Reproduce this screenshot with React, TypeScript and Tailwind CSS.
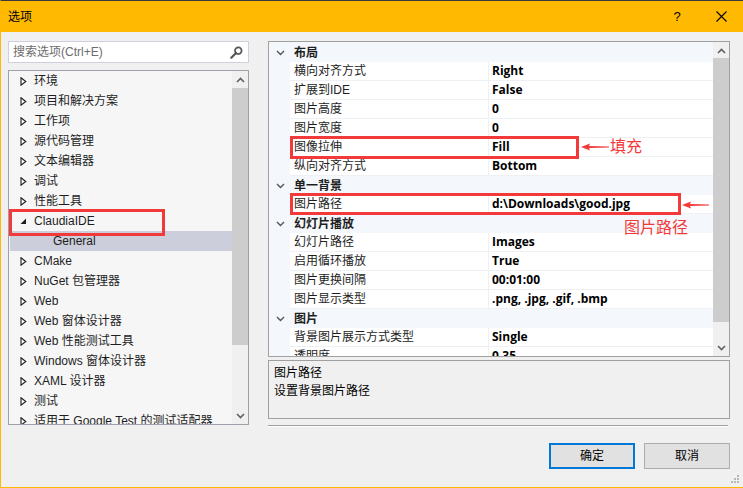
import React from "react";

const FONT = "font-['Liberation_Sans','Noto_Sans_CJK_SC',sans-serif]";

const treeItems: { label: string; state: "closed" | "open" | "leaf"; selected?: boolean }[] = [
  { label: "环境", state: "closed" },
  { label: "项目和解决方案", state: "closed" },
  { label: "工作项", state: "closed" },
  { label: "源代码管理", state: "closed" },
  { label: "文本编辑器", state: "closed" },
  { label: "调试", state: "closed" },
  { label: "性能工具", state: "closed" },
  { label: "ClaudiaIDE", state: "open" },
  { label: "General", state: "leaf", selected: true },
  { label: "CMake", state: "closed" },
  { label: "NuGet 包管理器", state: "closed" },
  { label: "Web", state: "closed" },
  { label: "Web 窗体设计器", state: "closed" },
  { label: "Web 性能测试工具", state: "closed" },
  { label: "Windows 窗体设计器", state: "closed" },
  { label: "XAML 设计器", state: "closed" },
  { label: "测试", state: "closed" },
  { label: "适用于 Google Test 的测试适配器", state: "closed" },
];

const groups: { name: string; rows: [string, string][] }[] = [
  {
    name: "布局",
    rows: [
      ["横向对齐方式", "Right"],
      ["扩展到IDE", "False"],
      ["图片高度", "0"],
      ["图片宽度", "0"],
      ["图像拉伸", "Fill"],
      ["纵向对齐方式", "Bottom"],
    ],
  },
  { name: "单一背景", rows: [["图片路径", "d:\\Downloads\\good.jpg"]] },
  {
    name: "幻灯片播放",
    rows: [
      ["幻灯片路径", "Images"],
      ["启用循环播放", "True"],
      ["图片更换间隔", "00:01:00"],
      ["图片显示类型", ".png, .jpg, .gif, .bmp"],
    ],
  },
  {
    name: "图片",
    rows: [
      ["背景图片展示方式类型", "Single"],
      ["透明度", "0.35"],
    ],
  },
];

function Chevron({ dir }: { dir: "up" | "down" }) {
  return (
    <svg width="9" height="6" viewBox="0 0 9 6">
      <path
        d={dir === "up" ? "M1 5 L4.5 1.5 L8 5" : "M1 1 L4.5 4.5 L8 1"}
        fill="none"
        stroke="#606060"
        strokeWidth="1.6"
      />
    </svg>
  );
}

function Scrollbar({ thumbTop, thumbHeight }: { thumbTop: number; thumbHeight: number }) {
  return (
    <div className="relative w-4 h-full bg-[#f0f0f0] flex flex-col justify-between items-center">
      <div className="h-[17px] flex items-center justify-center">
        <Chevron dir="up" />
      </div>
      <div
        className="absolute left-0 w-4 bg-[#cdcdcd]"
        style={{ top: thumbTop, height: thumbHeight }}
      />
      <div className="h-[17px] flex items-center justify-center">
        <Chevron dir="down" />
      </div>
    </div>
  );
}

function TreeArrow({ state }: { state: "closed" | "open" | "leaf" }) {
  if (state === "leaf") return <span className="w-[7px]" />;
  if (state === "open")
    return (
      <svg width="7" height="7" viewBox="0 0 7 7">
        <path d="M6 0.5 L6 6 L0.5 6 Z" fill="#1e1e1e" />
      </svg>
    );
  return (
    <svg width="7" height="9" viewBox="0 0 7 9">
      <path d="M1 0.8 L5.8 4.5 L1 8.2 Z" fill="none" stroke="#1e1e1e" strokeWidth="1.1" />
    </svg>
  );
}

function Annot({ className }: { className: string }) {
  return <div className={`absolute border-[3px] border-[#f23a3a] ${className}`} />;
}

function Arrow({ className, width }: { className: string; width: number }) {
  return (
    <svg className={`absolute ${className}`} width={width} height="10" viewBox={`0 0 ${width} 10`}>
      <path d={`M0 5 L9 1.5 L8 4 L${width} 4.6 L${width} 5.4 L8 6 L9 8.5 Z`} fill="#f23a3a" />
    </svg>
  );
}

export default function App() {
  return (
    <div
      className={`${FONT} relative w-[743px] h-[488px] bg-[#f0f0f0] text-[12px] text-[#1e1e1e] flex flex-col overflow-hidden border-t border-t-[#3a3a3e] border-l border-l-[#ffb900] border-b border-b-[#ffb900]`}
    >
      {/* Title bar */}
      <div className="h-[31px] bg-[#ffb900] flex items-center pl-[7px] shrink-0">
        <span className="text-[12px] text-black">选项</span>
        <span className="ml-auto w-[44px] text-center text-[13px] text-black">?</span>
        <span className="w-[44px] flex justify-center">
          <svg width="11" height="11" viewBox="0 0 11 11">
            <path d="M0.5 0.5 L10.5 10.5 M10.5 0.5 L0.5 10.5" stroke="#000" strokeWidth="1.1" />
          </svg>
        </span>
      </div>

      {/* Body */}
      <div className="flex flex-1 pt-[9px] pl-[7px]">
        {/* Left column */}
        <div className="w-[241px] flex flex-col gap-[7px]">
          <div className="h-[22px] bg-white border border-[#cfcfe0] flex items-center pl-[4px] pr-[5px]">
            <span className="text-[#6d6d6d]">搜索选项(Ctrl+E)</span>
            <svg className="ml-auto" width="13" height="13" viewBox="0 0 13 13">
              <circle cx="8.3" cy="4.7" r="3.3" fill="none" stroke="#555" strokeWidth="1.7" />
              <path d="M6 7 L1.3 11.7" stroke="#555" strokeWidth="2.2" strokeLinecap="round" />
            </svg>
          </div>
          <div className="h-[355px] border border-[#a0a0aa] bg-[#f6f6f6] flex overflow-hidden">
            <div className="flex-1 flex flex-col pl-px overflow-hidden">
              {treeItems.map((it) => (
                <div
                  key={it.label}
                  className={`h-5 shrink-0 flex items-center ${it.selected ? "bg-[#cccedb]" : ""} ${it.state === "leaf" ? "pl-[43px]" : "pl-[10px]"}`}
                >
                  {it.state !== "leaf" && (
                    <span className="w-[7px] flex justify-center">
                      <TreeArrow state={it.state} />
                    </span>
                  )}
                  <span className={`whitespace-nowrap ${it.state === "leaf" ? "" : "ml-[7px]"}`}>{it.label}</span>
                </div>
              ))}
            </div>
            <Scrollbar thumbTop={17} thumbHeight={257} />
          </div>
        </div>

        {/* Right column */}
        <div className="w-[462px] ml-[19px] flex flex-col">
          <div className="h-[316px] border border-[#a0a0a0] bg-white flex overflow-hidden">
            <div className="flex-1 flex flex-col pt-px bg-[#f4f7fb] overflow-hidden">
              {groups.map((g) => (
                <React.Fragment key={g.name}>
                  <div className="h-[19px] shrink-0 bg-[#f4f7fb] flex items-center">
                    <span className="w-[22px] flex justify-center">
                      <svg width="9" height="6" viewBox="0 0 9 6">
                        <path d="M1 1 L4.5 4.5 L8 1" fill="none" stroke="#555" strokeWidth="1.4" />
                      </svg>
                    </span>
                    <span className="pl-[3px] font-bold">{g.name}</span>
                  </div>
                  {g.rows.map(([k, v]) => (
                    <div key={k} className="h-[19px] shrink-0 flex">
                      <div className="w-[21px] bg-[#f4f7fb]" />
                      <div className="w-[198px] bg-white border-b border-[#eef0f4] flex items-center pl-[4px] whitespace-nowrap">{k}</div>
                      <div className="flex-1 bg-white border-b border-l border-[#eef0f4] flex items-center pl-[3px] font-bold font-['Open_Sans','Liberation_Sans',sans-serif] text-black whitespace-nowrap">{v}</div>
                    </div>
                  ))}
                </React.Fragment>
              ))}
            </div>
            <Scrollbar thumbTop={16} thumbHeight={264} />
          </div>

          <div className="mt-[3px] h-[59px] border border-[#a0a0a0] px-[5px] pt-[3px] leading-[18px]">
            <div className="text-black">图片路径</div>
            <div className="text-black">设置背景图片路径</div>
          </div>

          <div className="mt-[6px] w-[460px] h-[2px] border-t border-[#a0a0a0] border-b border-b-white" />

          <div className="mt-[16px] flex justify-end gap-[9px]">
            <button className="w-[86px] h-[26px] bg-[#e1e1e1] border-2 border-[#0078d7] text-black text-[12px]">确定</button>
            <button className="w-[86px] h-[26px] bg-[#e1e1e1] border border-[#adadad] text-black text-[12px]">取消</button>
          </div>
        </div>
      </div>

      {/* Resize grip */}
      <svg className="absolute right-[3px] bottom-[3px]" width="10" height="10" viewBox="0 0 10 10">
        <rect x="7" y="1" width="2" height="2" fill="#b8b8b8" />
        <rect x="4" y="4" width="2" height="2" fill="#b8b8b8" />
        <rect x="7" y="4" width="2" height="2" fill="#b8b8b8" />
        <rect x="1" y="7" width="2" height="2" fill="#b8b8b8" />
        <rect x="4" y="7" width="2" height="2" fill="#b8b8b8" />
        <rect x="7" y="7" width="2" height="2" fill="#b8b8b8" />
      </svg>

      {/* Red annotations */}
      <Annot className="left-[8px] top-[208px] w-[156px] h-[27px]" />
      <Annot className="left-[289px] top-[135px] w-[289px] h-[23px]" />
      <Annot className="left-[289px] top-[192px] w-[391px] h-[22px]" />
      <Arrow className="left-[580px] top-[141px]" width={28} />
      <Arrow className="left-[681px] top-[199px]" width={27} />
      <span className="absolute left-[609px] top-[136px] text-[16px] leading-[20px] text-[#f23a3a]">填充</span>
      <span className="absolute left-[623px] top-[217px] text-[16px] leading-[20px] text-[#f23a3a]">图片路径</span>
    </div>
  );
}
